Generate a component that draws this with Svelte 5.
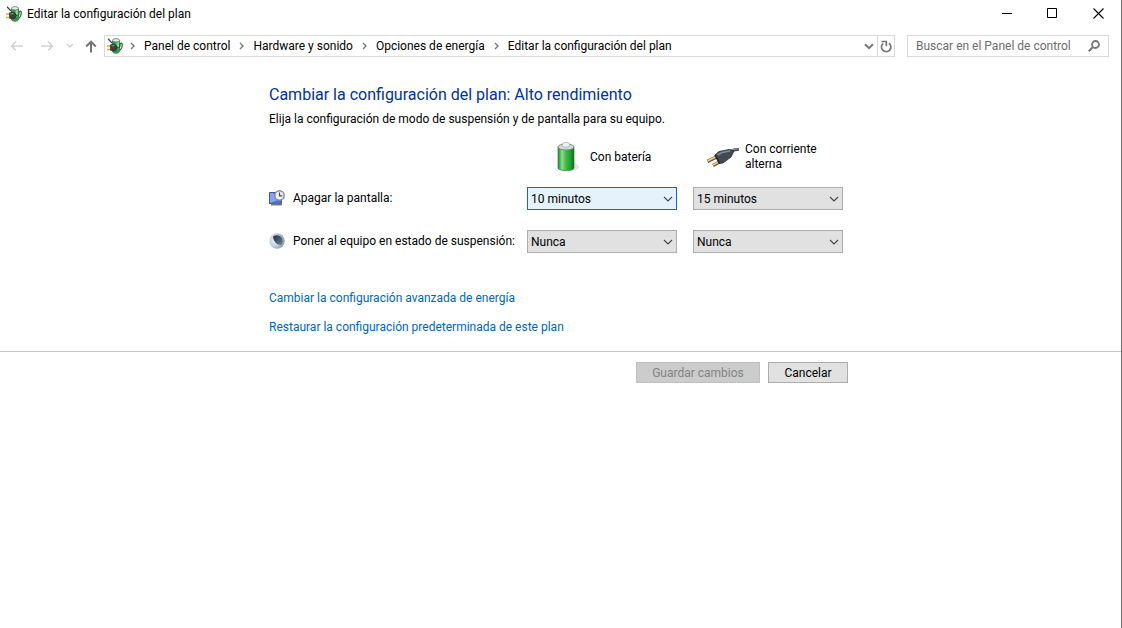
<script lang="ts">
  const crumbs = ['Panel de control', 'Hardware y sonido', 'Opciones de energía', 'Editar la configuración del plan'];
  const times = ['1 minuto', '5 minutos', '10 minutos', '15 minutos', '30 minutos', '1 hora', 'Nunca'];

  let displayBattery = $state('10 minutos');
  let displayPlugged = $state('15 minutos');
  let sleepBattery = $state('Nunca');
  let sleepPlugged = $state('Nunca');
  let search = $state('');
</script>

{#snippet planIcon()}
  <svg class="plan-icon" width="16" height="16" viewBox="0 0 16 16" aria-hidden="true">
    <path d="M5.500 2.500v10.800c0 2.600 7 2.600 7 0V2.500z" fill="#2f9e43" stroke="#23692f" stroke-width=".7" />
    <path d="M9.500 4h2.500v6.500l-2.500 1z" fill="#7ade80" />
    <ellipse cx="9" cy="2.300" rx="3.500" ry="1.700" fill="#e6eef0" stroke="#69777b" stroke-width=".8" />
    <path d="M1 1c1.800.5 1.800 3 4.200 3.800" fill="none" stroke="#3d4247" stroke-width="1.300" />
    <path d="M9.500 9.500c3 1 3.500-.5 3.500-2.500 0-2.500 2.300-2.500 2.300-.3 0 2-.5 4-2.300 5.500" fill="none" stroke="#245c31" stroke-width="1.200" />
    <path d="M0 8h4M0 11.500h4" stroke="#d9a92d" stroke-width="1.600" />
    <path d="M3.500 6.800l2.500-.6c2.500 0 4.200 1.300 4.200 3.300S8.600 13 6.300 13l-2.800-.7z" fill="#3b3f44" stroke="#202327" stroke-width=".6" />
    <path d="M4.500 8l3-.5" stroke="#8d949b" stroke-width="1.200" />
  </svg>
{/snippet}

{#snippet picker(id: string, label: string, value: string, onpick: (v: string) => void, active: boolean)}
  <div class="picker">
    <select {id} class:active aria-label={label} {value} onchange={(e) => onpick(e.currentTarget.value)}>
      {#each times as time}
        <option value={time}>{time}</option>
      {/each}
    </select>
    <svg width="10" height="6" viewBox="0 0 10 6" aria-hidden="true">
      <path d="M1 1l4 4 4-4" fill="none" stroke="#444" stroke-width="1.100" />
    </svg>
  </div>
{/snippet}

<div class="window">
  <header class="titlebar">
    {@render planIcon()}
    <span class="title">Editar la configuración del plan</span>
    <button aria-label="Minimizar">
      <svg width="11" height="11" viewBox="0 0 11 11"><path d="M1 5.500h10" stroke="#000" /></svg>
    </button>
    <button aria-label="Maximizar">
      <svg width="11" height="11" viewBox="0 0 11 11"><path d="M.5.5h9v9h-9z" fill="none" stroke="#000" /></svg>
    </button>
    <button aria-label="Cerrar">
      <svg width="11" height="11" viewBox="0 0 11 11"><path d="M.5.5l10 10M10.500.5l-10 10" stroke="#000" stroke-width="1.100" /></svg>
    </button>
  </header>

  <nav class="navbar">
    <div class="history">
      <button aria-label="Atrás" disabled>
        <svg width="14" height="12" viewBox="0 0 14 12"><path d="M13 6H1.500M6 1.500L1.500 6 6 10.500" fill="none" stroke="#d2d2d2" stroke-width="1.500" /></svg>
      </button>
      <button aria-label="Adelante" disabled>
        <svg width="14" height="12" viewBox="0 0 14 12"><path d="M1 6h11.500M8 1.500L12.500 6 8 10.500" fill="none" stroke="#d2d2d2" stroke-width="1.500" /></svg>
      </button>
      <button class="recent" aria-label="Ubicaciones recientes" disabled>
        <svg width="8" height="6" viewBox="0 0 8 6"><path d="M1 1l3 3 3-3" fill="none" stroke="#d2d2d2" stroke-width="1.400" /></svg>
      </button>
      <button class="up" aria-label="Subir">
        <svg width="12" height="13" viewBox="0 0 12 13"><path d="M6 12.500V2M1.200 6.500L6 1.700l4.800 4.800" fill="none" stroke="#757575" stroke-width="2" /></svg>
      </button>
    </div>

    <div class="address">
      {@render planIcon()}
      {#each crumbs as crumb}
        <svg class="sep" width="5" height="8" viewBox="0 0 5 8" aria-hidden="true"><path d="M1 1l3 3-3 3" fill="none" stroke="#777" stroke-width="1.400" /></svg>
        <a href="#top">{crumb}</a>
      {/each}
      <button class="drop" aria-label="Ubicaciones anteriores">
        <svg width="10" height="7" viewBox="0 0 10 7"><path d="M1 1.200l4 4 4-4" fill="none" stroke="#777" stroke-width="2" /></svg>
      </button>
      <button class="refresh" aria-label="Actualizar">
        <svg width="12" height="13" viewBox="0 0 12 13">
          <path d="M9 3.200A4.700 4.700 0 1 1 3.200 3.300" fill="none" stroke="#777" stroke-width="1.700" />
          <path d="M1.500 1.500h4.800v4.800" fill="none" stroke="#777" stroke-width="1.700" />
        </svg>
      </button>
    </div>

    <label class="search">
      <input type="text" placeholder="Buscar en el Panel de control" aria-label="Buscar en el Panel de control" bind:value={search} />
      <svg width="12" height="12" viewBox="0 0 12 12" aria-hidden="true">
        <circle cx="7.500" cy="4.500" r="3.500" fill="none" stroke="#777" stroke-width="1.800" />
        <path d="M5 7L.8 11.200" stroke="#777" stroke-width="2" />
      </svg>
    </label>
  </nav>

  <main class="column">
    <h1>Cambiar la configuración del plan: Alto rendimiento</h1>
    <p>Elija la configuración de modo de suspensión y de pantalla para su equipo.</p>

    <div class="settings">
      <div class="source battery">
        <svg width="32" height="32" viewBox="0 0 32 32" aria-hidden="true">
          <defs>
            <linearGradient id="cell">
              <stop offset="0" stop-color="#1f8a2c" />
              <stop offset=".25" stop-color="#8be08a" />
              <stop offset=".5" stop-color="#43b94b" />
              <stop offset=".8" stop-color="#1f9a30" />
              <stop offset="1" stop-color="#12691f" />
            </linearGradient>
          </defs>
          <path d="M23 20l6 5c1 2-3 5-8 5z" fill="#e3e3e3" />
          <path d="M8 6v21c0 3.500 16 3.500 16 0V6z" fill="url(#cell)" stroke="#277533" stroke-width=".6" />
          <ellipse cx="16" cy="6" rx="8" ry="3" fill="#d3dcd9" stroke="#71917a" />
          <path d="M12.500 5V2.700c0-1.600 7-1.600 7 0V5c0 1.600-7 1.600-7 0z" fill="#edf1f4" stroke="#9ba6ad" stroke-width=".7" />
        </svg>
        <span>Con batería</span>
      </div>
      <div class="source plugged">
        <svg width="32" height="32" viewBox="0 0 32 32" aria-hidden="true">
          <path d="M21 11c5-1 5-3 11-2.500" fill="none" stroke="#4b5059" stroke-width="3" />
          <path d="M21 10c5-1 6-2.500 11-2" fill="none" stroke="#a5abb2" stroke-width=".8" />
          <path d="M.5 20.500l9-4.500M6 24.500l9-5" stroke="#795329" stroke-width="3.400" />
          <path d="M.5 20l9-4.500M6 24l9-5" stroke="#efcf99" stroke-width="1.600" />
          <path d="M8 14l4-3.500 10-2 5 1.500-3 6-8 6-4 .5z" fill="#444a55" stroke="#292d35" stroke-width=".8" />
          <path d="M10.500 14l4.500-2.500 8-1.500" fill="none" stroke="#848c98" stroke-width="1.500" />
          <path d="M8 14l4.500 8" stroke="#20242b" stroke-width="1.500" />
        </svg>
        <span>Con corriente<br />alterna</span>
      </div>

      <label class="setting" for="display-battery">
        <svg width="16" height="16" viewBox="0 0 16 16" aria-hidden="true">
          <path d="M.5 2.500h12v11H.5z" fill="#4a6fdc" stroke="#3f529c" />
          <path d="M1 3h3l5 7-8 3z" fill="#86a4ec" />
          <path d="M2 14.500h11" stroke="#747985" stroke-width="2" />
          <circle cx="10.500" cy="5.500" r="4.700" fill="#edf1f4" stroke="#858b91" stroke-width="1.500" />
          <path d="M10.500 2.500v3.300h2.700" fill="none" stroke="#484d55" stroke-width="1.200" />
        </svg>
        Apagar la pantalla:
      </label>
      {@render picker('display-battery', 'Apagar la pantalla con batería', displayBattery, (v) => (displayBattery = v), true)}
      {@render picker('display-plugged', 'Apagar la pantalla con corriente alterna', displayPlugged, (v) => (displayPlugged = v), false)}

      <label class="setting" for="sleep-battery">
        <svg width="16" height="16" viewBox="0 0 16 16" aria-hidden="true">
          <defs>
            <radialGradient id="moon" cx=".35" cy=".45" r=".65">
              <stop offset="0" stop-color="#eef5fc" />
              <stop offset=".6" stop-color="#bdcfdf" />
              <stop offset="1" stop-color="#8699ae" />
            </radialGradient>
            <linearGradient id="shade" x1="0" y1="0" x2="1" y2="1">
              <stop offset="0" stop-color="#26303f" />
              <stop offset="1" stop-color="#6f8196" />
            </linearGradient>
          </defs>
          <circle cx="8" cy="8" r="7.700" fill="url(#moon)" />
          <path d="M4 3.500c3.500-2.500 8.500-1 9.500 3 .6 2.500-.2 4.500-1.700 5.500C8 12 4.500 9 4 3.500z" fill="url(#shade)" />
        </svg>
        Poner al equipo en estado de suspensión:
      </label>
      {@render picker('sleep-battery', 'Suspensión con batería', sleepBattery, (v) => (sleepBattery = v), false)}
      {@render picker('sleep-plugged', 'Suspensión con corriente alterna', sleepPlugged, (v) => (sleepPlugged = v), false)}
    </div>

    <div class="links">
      <a href="#advanced">Cambiar la configuración avanzada de energía</a>
      <a href="#restore">Restaurar la configuración predeterminada de este plan</a>
    </div>
  </main>

  <footer>
    <div class="column actions">
      <button disabled>Guardar cambios</button>
      <button>Cancelar</button>
    </div>
  </footer>
</div>

<style>
  :global(body) { background: #fff; }

  .window {
    box-sizing: border-box;
    min-height: 100vh;
    border-right: 1px solid #6b6b6b;
    font: 12px/16px "Segoe UI", Roboto, "Noto Sans", sans-serif;
    color: #000;
  }
  button, input, select { font: inherit; color: inherit; margin: 0; }
  button { padding: 0; border: 0; background: none; }
  svg { display: block; flex: none; }
  a { text-decoration: none; }

  /* title bar */
  .titlebar { display: flex; align-items: center; height: 28px; padding-left: 6px; }
  .title { flex: 1; padding-left: 5px; }
  .titlebar button { display: grid; place-items: center; align-self: flex-start; width: 46px; height: 27px; }

  /* navigation */
  .navbar { display: flex; align-items: center; padding: 7px 12px 0 10px; }
  .history { display: flex; align-items: center; width: 94px; }
  .history button { width: 14px; margin-right: 16px; }
  .history .recent { width: 8px; margin: 0 11px 0 -4px; }
  .history .up { width: 12px; margin: 0; }
  .address, .search {
    display: flex;
    align-items: center;
    box-sizing: border-box;
    height: 22px;
    border: 1px solid #d9d9d9;
  }
  .address { flex: 1; padding-left: 2px; }
  .address a { color: inherit; white-space: nowrap; }
  .sep { margin: 0 9px; }
  .address .plan-icon { margin-right: -2px; }
  .drop { margin-left: auto; padding: 0 3px; }
  .refresh { display: grid; place-items: center; width: 17px; height: 20px; border-left: 1px solid #d9d9d9; }
  .search { width: 202px; margin-left: 12px; padding: 0 8px; }
  .search input { flex: 1; min-width: 0; padding: 0; border: 0; outline: 0; background: none; }
  .search input::placeholder { color: #6d6d6d; opacity: 1; }

  /* plan settings */
  .column { width: 583px; max-width: 100%; margin: 0 auto; }
  h1 { margin: 0; padding-top: 27px; font-size: 16px; line-height: 22px; font-weight: 400; color: #003399; }
  p { margin: 5px 0 0; }
  .settings {
    display: grid;
    grid-template-columns: 242px 150px 150px;
    column-gap: 16px;
    align-items: center;
    padding-top: 14px;
  }
  .source { display: flex; align-items: center; height: 32px; line-height: 15px; }
  .battery { grid-column: 2; gap: 8px; padding-left: 23px; }
  .plugged { gap: 6px; padding-left: 14px; }
  .picker { display: grid; align-items: center; margin: 14px 0 6px; }
  .setting { display: flex; align-items: center; gap: 8px; margin: 12px 0 6px; white-space: nowrap; }
  .picker select, .picker svg { grid-area: 1 / 1; }
  .picker svg { justify-self: end; margin-right: 4px; pointer-events: none; }
  select {
    appearance: none;
    width: 100%;
    height: 23px;
    padding: 0 3px;
    border: 1px solid #adadad;
    border-radius: 0;
    background: #e1e1e1;
    outline: 0;
  }
  select.active { border-color: #0f6fae; background: #e5f1fb; }
  .links { display: flex; flex-direction: column; align-items: flex-start; gap: 13px; padding: 31px 0 16px; }
  .links a { color: #0066bb; }

  /* buttons */
  footer { border-top: 1px solid #c8c8c8; padding-top: 10px; }
  .actions { display: flex; justify-content: flex-end; gap: 8px; box-sizing: border-box; padding-right: 4px; }
  .actions button { width: 80px; height: 21px; border: 1px solid #adadad; background: #e1e1e1; }
  .actions button:disabled { width: 124px; border-color: #bfbfbf; background: #ccc; color: #838383; }
</style>
